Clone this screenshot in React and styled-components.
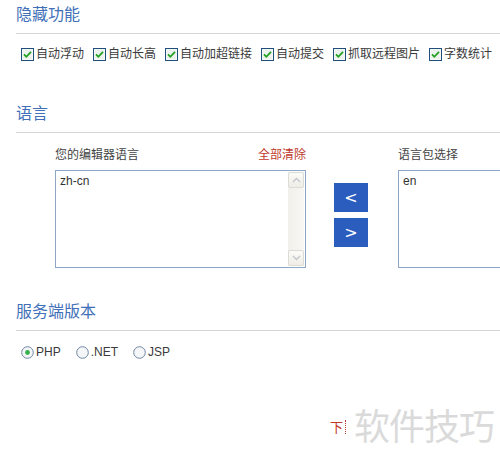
import React from 'react';
import styled, { createGlobalStyle } from 'styled-components';

const GlobalStyle = createGlobalStyle`
  html, body {
    margin: 0;
    padding: 0;
    background: #fff;
  }
  body {
    font-family: "Liberation Sans", "Noto Sans CJK SC", sans-serif;
    font-size: 12px;
    color: #333;
  }
`;

const Page = styled.div`
  position: relative;
  width: 500px;
  height: 466px;
  overflow: hidden;
  padding-left: 16px;
  box-sizing: border-box;
`;

const Section = styled.section`
  margin-top: ${(p) => p.$top || 0}px;
`;

const Title = styled.h2`
  margin: 0;
  height: 33px;
  line-height: 26px;
  font-size: 16px;
  font-weight: normal;
  color: #4170b8;
  font-family: "Noto Sans CJK SC", sans-serif;
  border-bottom: 1px solid #d4d4d4;
`;

const OptionRow = styled.div`
  display: flex;
  align-items: center;
  height: 16px;
  margin-top: ${(p) => p.$top || 12}px;
  padding-left: 5px;
  gap: ${(p) => p.$gap || 9}px;
`;

const Option = styled.label`
  display: flex;
  align-items: center;
  gap: 2px;
  white-space: nowrap;
  line-height: 16px;
  color: #3a3a3a;
`;

const Check = () => (
  <svg width="13" height="13" viewBox="0 0 13 13">
    <rect x="0.5" y="0.5" width="12" height="12" fill="#fff" stroke="#1d4f7a" />
    <rect x="1.5" y="1.5" width="10" height="10" fill="#eef2ee" />
    <path d="M3 6.4 L5.3 8.8 L10 3.8" fill="none" stroke="#21a121" strokeWidth="1.8" />
  </svg>
);

const Radio = ({ on }) => (
  <svg width="13" height="13" viewBox="0 0 13 13">
    <circle cx="6.5" cy="6.5" r="5.8" fill="#f4f6f8" stroke="#6f86a3" />
    {on && <circle cx="6.5" cy="6.5" r="2.4" fill="#36b04a" />}
  </svg>
);

const LangRow = styled.div`
  display: flex;
  margin-top: 13px;
  padding-left: 39px;
`;

const Column = styled.div`
  display: flex;
  flex-direction: column;
  width: ${(p) => p.$w}px;
  flex-shrink: 0;
`;

const Caption = styled.div`
  display: flex;
  justify-content: space-between;
  height: 16px;
  line-height: 16px;
  margin-bottom: 8px;
  color: #444;
  font-family: "Noto Sans CJK SC", sans-serif;
`;

const ClearLink = styled.a`
  color: #c0392b;
  text-decoration: none;
  cursor: pointer;
`;

const ListBox = styled.div`
  position: relative;
  height: 98px;
  box-sizing: border-box;
  border: 1px solid #8ea7c6;
  padding: 3px 4px;
  line-height: 14px;
  color: #333;
  background: #fff;
`;

const ScrollTrack = styled.div`
  position: absolute;
  top: 1px;
  right: 1px;
  bottom: 1px;
  width: 16px;
  background: linear-gradient(to right, #f1f0ea, #f8f7f3);
  display: flex;
  flex-direction: column;
  justify-content: space-between;
`;

const ScrollButton = styled.div`
  height: 16px;
  box-sizing: border-box;
  border: 1px solid #dcdcd4;
  border-radius: 2px;
  background: linear-gradient(#fbfbf8, #eeede6);
  display: flex;
  align-items: center;
  justify-content: center;
`;

const Chevron = ({ up }) => (
  <svg width="9" height="6" viewBox="0 0 9 6">
    <path
      d={up ? 'M1 5 L4.5 1.5 L8 5' : 'M1 1 L4.5 4.5 L8 1'}
      fill="none"
      stroke="#c3c6cc"
      strokeWidth="1.4"
    />
  </svg>
);

const Buttons = styled.div`
  display: flex;
  flex-direction: column;
  gap: 6px;
  margin: 37px 30px 0 28px;
  flex-shrink: 0;
`;

const MoveButton = styled.button`
  width: 34px;
  height: 29px;
  border: none;
  padding: 0;
  background: #2a5dbd;
  color: #fff;
  font-family: "DejaVu Sans", sans-serif;
  font-size: 16px;
  line-height: 29px;
  cursor: pointer;
`;

const Watermark = styled.div`
  position: absolute;
  right: 6px;
  bottom: 16px;
  display: flex;
  align-items: center;
  gap: 8px;
`;

const Down = styled.span`
  color: #c0392b;
  font-size: 13px;
  font-family: "Noto Sans CJK SC", sans-serif;
  padding-right: 2px;
  border-right: 1px dotted #c0392b;
  line-height: 14px;
  margin-top: 6px;
`;

const MarkText = styled.span`
  color: #dadada;
  font-size: 36px;
  letter-spacing: -1px;
  font-family: "Noto Sans CJK SC", sans-serif;
`;

const features = ['自动浮动', '自动长高', '自动加超链接', '自动提交', '抓取远程图片', '字数统计'];

const App = () => (
  <Page>
    <GlobalStyle />
    <Section>
      <Title>隐藏功能</Title>
      <OptionRow>
        {features.map((f) => (
          <Option key={f}>
            <Check />
            {f}
          </Option>
        ))}
      </OptionRow>
    </Section>

    <Section $top={37}>
      <Title>语言</Title>
      <LangRow>
        <Column $w={251}>
          <Caption>
            <span>您的编辑器语言</span>
            <ClearLink>全部清除</ClearLink>
          </Caption>
          <ListBox>
            zh-cn
            <ScrollTrack>
              <ScrollButton><Chevron up /></ScrollButton>
              <ScrollButton><Chevron /></ScrollButton>
            </ScrollTrack>
          </ListBox>
        </Column>
        <Buttons>
          <MoveButton>&lt;</MoveButton>
          <MoveButton>&gt;</MoveButton>
        </Buttons>
        <Column $w={251}>
          <Caption>
            <span>语言包选择</span>
          </Caption>
          <ListBox>en</ListBox>
        </Column>
      </LangRow>
    </Section>

    <Section $top={29}>
      <Title>服务端版本</Title>
      <OptionRow $top={13} $gap={15}>
        <Option><Radio on />PHP</Option>
        <Option><Radio />.NET</Option>
        <Option><Radio />JSP</Option>
      </OptionRow>
    </Section>

    <Watermark>
      <Down>下</Down>
      <MarkText>软件技巧</MarkText>
    </Watermark>
  </Page>
);

export default App;
